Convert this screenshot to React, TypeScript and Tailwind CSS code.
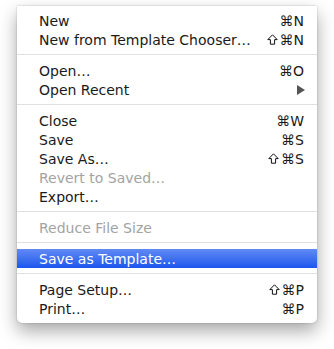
import React from "react";

type Item =
  | { kind: "sep" }
  | { kind: "item"; label: string; keys?: string; shift?: boolean; disabled?: boolean; active?: boolean; submenu?: boolean };

const items: Item[] = [
  { kind: "item", label: "New", keys: "⌘N" },
  { kind: "item", label: "New from Template Chooser…", keys: "⌘N", shift: true },
  { kind: "sep" },
  { kind: "item", label: "Open…", keys: "⌘O" },
  { kind: "item", label: "Open Recent", submenu: true },
  { kind: "sep" },
  { kind: "item", label: "Close", keys: "⌘W" },
  { kind: "item", label: "Save", keys: "⌘S" },
  { kind: "item", label: "Save As…", keys: "⌘S", shift: true },
  { kind: "item", label: "Revert to Saved…", disabled: true },
  { kind: "item", label: "Export…" },
  { kind: "sep" },
  { kind: "item", label: "Reduce File Size", disabled: true },
  { kind: "sep" },
  { kind: "item", label: "Save as Template…", active: true },
  { kind: "sep" },
  { kind: "item", label: "Page Setup…", keys: "⌘P", shift: true },
  { kind: "item", label: "Print…", keys: "⌘P" },
];

// Flecha de mayúsculas (contorno)
function ShiftIcon() {
  return (
    <svg width="11" height="11" viewBox="0 0 11 11" className="mr-[2px]">
      <path
        d="M5.5 0.8 L10.2 5.6 L7.6 5.6 L7.6 10.2 L3.4 10.2 L3.4 5.6 L0.8 5.6 Z"
        fill="none"
        stroke="#111"
        strokeWidth="1"
        strokeLinejoin="miter"
      />
    </svg>
  );
}

export default function App() {
  return (
    <div className="w-[334px] h-[349px] bg-white pt-[6px] pl-[17px] font-['DejaVu_Sans',sans-serif]">
      {/* Menú */}
      <div className="w-[300px] bg-white rounded-b-[5px] pt-[5px] pb-[5px] shadow-[0_8px_18px_rgba(0,0,0,0.35),0_0_2px_rgba(0,0,0,0.25)]">
        {items.map((it, idx) =>
          it.kind === "sep" ? (
            <div key={idx} className="pt-[5px] pb-[6px]">
              <div className="h-px bg-[#e0e0e0]" />
            </div>
          ) : (
            <div
              key={idx}
              className={
                "h-[19px] flex items-center justify-between pl-[22px] pr-[13px] text-[14px] leading-none " +
                (it.active
                  ? "bg-gradient-to-b from-[#6289f3] to-[#1a55ee] text-white"
                  : it.disabled
                  ? "text-[#a3a3a3]"
                  : "text-[#1a1a1a]")
              }
            >
              <span>{it.label}</span>
              {it.keys && (
                <span className="flex items-center">
                  {it.shift && <ShiftIcon />}
                  <span>{it.keys}</span>
                </span>
              )}
              {it.submenu && (
                <svg width="8" height="10" viewBox="0 0 8 10" className="mr-[-1px]">
                  <path d="M0 0 L8 5 L0 10 Z" fill="#555" />
                </svg>
              )}
            </div>
          )
        )}
      </div>
    </div>
  );
}
